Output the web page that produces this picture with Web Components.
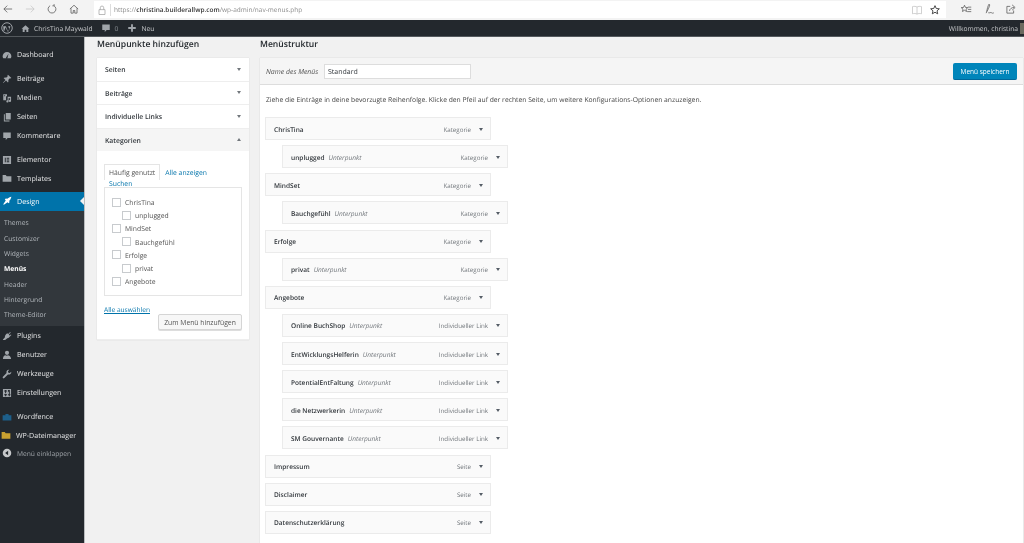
<!DOCTYPE html>
<html lang="de">
<head>
<meta charset="utf-8">
<title>Menüs</title>
<style>
html, body { margin: 0; height: 100%; overflow: hidden; background: #f1f1f1; }
body { font: 7px "Open Sans", "Liberation Sans", sans-serif; color: #444; display: flex; flex-direction: column; text-rendering: geometricPrecision; filter: blur(.3px); }
</style>
</head>
<body>
<browser-bar url="christina.builderallwp.com"></browser-bar>
<admin-bar></admin-bar>
<div style="display:flex;flex:1;min-height:0">
	<side-menu></side-menu>
	<menu-screen style="flex:1;min-width:0"></menu-screen>
</div>

<script>
const ICONS = {
	back: '<path d="M13.500 8H2.500M7 3.500 2.500 8 7 12.500" fill="none" stroke="currentColor" stroke-width="1"/>',
	forward: '<path d="M2.500 8h11M9 3.500 13.500 8 9 12.500" fill="none" stroke="currentColor" stroke-width="1"/>',
	reload: '<path d="M5.500 3.600A5.200 5.200 0 1 0 10.500 3.600M10.800 1.500v2.300h-2.300" fill="none" stroke="currentColor" stroke-width="1"/>',
	home: '<path d="M2.500 8 8 3l5.500 5M4 7v6.500h3V10h2v3.500h3V7" fill="none" stroke="currentColor" stroke-width="1"/>',
	lock: '<path d="M4 7.500h8v6.500H4zM5.700 7.500V5a2.300 2.300 0 0 1 4.600 0v2.500" fill="none" stroke="currentColor" stroke-width=".9"/>',
	book: '<path d="M8 4C6.500 3 4 3 2 3.500v9.500c2-.5 4.500-.5 6 .5 1.500-1 4-1 6-.5V3.500C12 3 9.500 3 8 4zM8 4v9.500" fill="none" stroke="currentColor" stroke-width=".9"/>',
	star: '<path d="m8 2.200 1.700 3.800 4.100.4-3.100 2.700.9 4-3.600-2.100-3.600 2.100.9-4-3.100-2.700 4.100-.4z" fill="none" stroke="currentColor" stroke-width="1.300"/>',
	favlist: '<path d="m6 3 1.300 2.900 3.100.3-2.400 2 .7 3.100L6 9.700l-2.700 1.600.7-3.100-2.400-2 3.100-.3zM10.500 5.500H15M10.500 8.500H15M9.500 11.500H15" fill="none" stroke="currentColor" stroke-width="1"/>',
	pen: '<path d="M8 1.500C6.500 4 5.500 8 5 11.500c1.500-2.500 3.500-6 4-9zM5 11.500l-.8 2M7 13c1.500.8 3-1 4.500 0s2 .5 3 0" fill="none" stroke="currentColor" stroke-width="1"/>',
	share: '<path d="M7 4.500H2.500v9h9V10M6 10.500c.5-3 3-4.500 6-4.500M9.500 2.500 13.500 6l-4 3.500" fill="none" stroke="currentColor" stroke-width="1"/>',
	wp: '<circle cx="8" cy="8" r="7" fill="none" stroke="currentColor" stroke-width="1.300"/><path d="M3 5.500h3.500L9.500 13 11 9l-1.500-3.500h3L10 13H9L6 7l-2 6h-.5z" fill="currentColor"/>',
	house: '<path d="M8 2 1 8.500h2V14h3.500v-4h3v4H13V8.500h2z" fill="currentColor"/>',
	comment: '<path d="M2 2.500h12v8.500H9l-3 3.500V11H2z" fill="currentColor"/>',
	plus: '<path d="M6.500 2h3v4.500H14v3H9.500V14h-3V9.500H2v-3h4.500z" fill="currentColor"/>',
	gauge: '<path d="M8 3a7 7 0 0 0-7 7c0 1.300.3 2.400 1 3h12c.7-.6 1-1.700 1-3a7 7 0 0 0-7-7zm-1 8 3.500-5-1.500 5.700a1.300 1.300 0 1 1-2-.7z" fill="currentColor"/>',
	pin: '<path d="m9.500 1 5.500 5.500-1.500.8-1-.6L10 9.500c.6 1.500.3 3-.5 4L6.500 10.500 2 14.500l-.5-.5L5.500 9.500 2.500 6.500c1-.8 2.500-1.100 4-.5L9.200 3.500 8.700 2.500z" fill="currentColor"/>',
	media: '<path d="M2 2h6v3H6.500v6.500H2zM3.500 3.500v1.500H5V3.500zM9 6h5.500v6.500a1.800 1.800 0 1 1-1.500-1.700V8.500h-2.500v5a1.800 1.800 0 1 1-1.500-1.800z" fill="currentColor"/>',
	pages: '<path d="M6 1.500h8v10.500H6zM4.500 3.500V13.500H12V15H3V3.500z" fill="currentColor"/>',
	elementor: '<path d="M1.500 1.500h13v13h-13zM4.500 4.500v7H6v-7zM7.500 4.500V6h4V4.500zM7.500 7.300v1.400h4V7.300zM7.500 10v1.500h4V10z" fill="currentColor" fill-rule="evenodd"/>',
	folder: '<path d="M1 3h5l1.500 2H15v9H1z" fill="currentColor"/>',
	brush: '<path d="M15 1c-3 .6-5.500 2-6.500 3.500L6 4 4.500 5.500 6 7 2 13l1 1 6-4 1.500 1.500L12 10l-.5-2.500C13 6.500 14.400 4 15 1z" fill="currentColor"/>',
	plug: '<path d="M14 2.500 10.500 6l-1-1L13 1.500zM15 6.500l-3.500 3.500-1-1L14 5.500zM8.500 3.500l4.500 4.500c-.8 2-2.300 3.300-4.500 3.500L5 14.500 1.500 14.500 1.500 13.500 4.500 10.500C4.700 7 6 4.700 8.500 3.500z" fill="currentColor"/>',
	user: '<circle cx="8" cy="4.500" r="3.300" fill="currentColor"/><path d="M1.500 14.500c0-4 2-5.800 4-6 .8.800 3.200.8 4 0 2 .2 5 2 5 6z" fill="currentColor"/>',
	wrench: '<path d="M14.800 4.200a4 4 0 0 1-5.300 4.500L3.700 14.500a1.500 1.500 0 0 1-2.200-2.200l5.800-5.800A4 4 0 0 1 11.800 1.200L9.500 3.500l.7 2.300 2.300.7z" fill="currentColor"/>',
	settings: '<path d="M1.500 1.500h13v13h-13zM3.500 4v1.500H5V8h1.500V5.500H8V4H6.500V3H5v1zM9.500 3v3H11v4H9.500v1.500H11V13h1.500v-1.500h1V10h-1V3zM3.500 10v1.500H5V13h1.500v-1.500H8V10H6.500V9H5v1z" fill="currentColor" fill-rule="evenodd"/>',
	wordfence: '<path d="M1 5h4.500V3h5v2H15v8.500H1z" fill="currentColor"/>',
	collapse: '<circle cx="8" cy="8" r="6.800" fill="currentColor"/><path d="M9.800 4.500v7L5 8z" fill="#23282d"/>'
};

// small icon element, name picks the drawing from ICONS
class AppIcon extends HTMLElement {
	constructor() {
		super();
		this.attachShadow({mode: "open"});
	}
	connectedCallback() {
		const size = this.getAttribute("size") || 12;
		this.shadowRoot.innerHTML = `
			<style>
				:host { display: inline-flex; flex: none; width: ${size}px; height: ${size}px; }
				svg { width: 100%; height: 100%; display: block; }
			</style>
			<svg viewBox="0 0 16 16">${ICONS[this.getAttribute("name")] || ""}</svg>`;
	}
}
customElements.define("app-icon", AppIcon);

class BrowserBar extends HTMLElement {
	constructor() {
		super();
		this.attachShadow({mode: "open"});
		this.shadowRoot.innerHTML = `
			<style>
				:host { display: flex; align-items: center; height: 20px; background: #f3f3f3; color: #555; box-sizing: border-box; padding: 0 4px 2px 0; }
				.nav { display: flex; width: 94px; box-sizing: border-box; padding-left: 2px; gap: 10px; }
				.nav app-icon:nth-child(2) { color: #c4c4c4; }
				.url { flex: none; width: 852px; height: 17px; margin-top: 1px; box-sizing: border-box; background: #fff; display: flex; align-items: center; padding: 0 5px 0 2px; font-size: 6.500px; color: #8a8a8a; }
				.url b { font-weight: 600; color: #333; }
				.url span { flex: 1; margin-left: 2px; padding-left: 3px; border-left: 1px solid #ddd; line-height: 12px; }
				.url app-icon + app-icon { margin-left: 6px; }
				.url app-icon:last-child { color: #444; }
				.tools { flex: 1; display: flex; justify-content: space-between; padding: 0 3px 0 14px; }
			</style>
			<div class="nav">
				<app-icon name="back"></app-icon>
				<app-icon name="forward"></app-icon>
				<app-icon name="reload"></app-icon>
				<app-icon name="home"></app-icon>
			</div>
			<div class="url">
				<app-icon name="lock" style="color:#999"></app-icon>
				<span>https://<b>christina.builderallwp.com</b>/wp-admin/nav-menus.php</span>
				<app-icon name="book" style="color:#bbb"></app-icon>
				<app-icon name="star"></app-icon>
			</div>
			<div class="tools">
				<app-icon name="favlist"></app-icon>
				<app-icon name="pen"></app-icon>
				<app-icon name="share"></app-icon>
			</div>`;
	}
}
customElements.define("browser-bar", BrowserBar);

class AdminBar extends HTMLElement {
	constructor() {
		super();
		this.attachShadow({mode: "open"});
		this.shadowRoot.innerHTML = `
			<style>
				:host { display: flex; align-items: center; height: 17px; background: #23282d; color: #c8cacc; font-size: 6.700px; padding-left: 1px; box-sizing: border-box; border-bottom: 1px solid #54595d; }
				app-icon { color: #a0a5aa; }
				.site { margin-left: 8px; display: flex; align-items: center; gap: 4px; }
				.count { margin-left: 8px; display: flex; align-items: center; gap: 4px; }
				.count span { color: #8a8f94; }
				.new { margin-left: 9px; display: flex; align-items: center; gap: 4px; }
				.howdy { margin-left: auto; white-space: nowrap; display: flex; align-items: center; gap: 2px; }
				.avatar { width: 4px; height: 11px; background: #6b6b60; }
			</style>
			<app-icon name="wp" size="12"></app-icon>
			<div class="site"><app-icon name="house" size="9"></app-icon>ChrisTina Maywald</div>
			<div class="count"><app-icon name="comment" size="10"></app-icon><span>0</span></div>
			<div class="new"><app-icon name="plus" size="10"></app-icon>Neu</div>
			<div class="howdy">Willkommen, christina <div class="avatar"></div></div>`;
	}
}
customElements.define("admin-bar", AdminBar);

const SIDE_ITEMS = [
	["gauge", "Dashboard", 0],
	["pin", "Beiträge", 1], ["media", "Medien", 0], ["pages", "Seiten", 0], ["comment", "Kommentare", 0],
	["elementor", "Elementor", 1], ["folder", "Templates", 0],
	["brush", "Design", 1, "current"],
	["plug", "Plugins", 0], ["user", "Benutzer", 0], ["wrench", "Werkzeuge", 0], ["settings", "Einstellungen", 0],
	["wordfence", "Wordfence", 1, "wf"], ["folder", "WP-Dateimanager", 0, "fm"],
	["collapse", "Menü einklappen", 0, "fold"]
];
const SUB_ITEMS = ["Themes", "Customizer", "Widgets", "Menüs", "Header", "Hintergrund", "Theme-Editor"];

class SideMenu extends HTMLElement {
	constructor() {
		super();
		this.attachShadow({mode: "open"});
		let rows = "";
		for (const [icon, label, gap, kind] of SIDE_ITEMS) {
			rows += `<div class="item ${kind || ""} ${gap ? "gap" : ""}"><app-icon name="${icon}" size="${kind == "fm" ? 12 : 10}"></app-icon><span>${label}</span></div>`;
			if (kind == "current") {
				rows += `<div class="sub">${SUB_ITEMS.map(s => `<div class="${s == "Menüs" ? "on" : ""}">${s}</div>`).join("")}</div>`;
			}
		}
		this.shadowRoot.innerHTML = `
			<style>
				:host { display: block; flex: none; width: 85px; box-sizing: border-box; background: #23282d; border-right: 1px solid #b9bcbe; padding-top: 8.500px; color: #e4e5e6; font-size: 7.100px; }
				.item { height: 18.900px; display: flex; align-items: center; padding-left: 2px; position: relative; }
				.item span { padding-top: 1px; }
				.item app-icon { width: 10px; color: #a0a5aa; margin-right: 5px; }
				.gap { margin-top: 5.100px; }
				.item.current { background: #0073aa; color: #fff; margin-top: 4.100px; }
				.current app-icon { color: #fff; }
				.current::after { content: ""; position: absolute; right: 0; top: 5px; border: 4.500px solid transparent; border-right-color: #f1f1f1; border-left-width: 0; }
				.wf app-icon { color: #1d5f8a; }
				.fm { padding-left: 1px; }
				.fm app-icon { color: #c8a030; margin-right: 5px; }
				.fold { color: #a0a5aa; margin-top: -1px; font-size: 6.700px; }
				.fold app-icon { color: #c6c8ca; }
				.sub { background: #32373c; color: #b4b9be; padding: 4.500px 0 4px 4px; font-size: 6.700px; }
				.sub div { height: 15.300px; line-height: 16.300px; }
				.sub .on { color: #fff; font-weight: 700; }
			</style>
			${rows}`;
	}
}
customElements.define("side-menu", SideMenu);

// one row of the accordion in the left column
class AccordionRow extends HTMLElement {
	constructor() {
		super();
		this.attachShadow({mode: "open"});
		this.shadowRoot.innerHTML = `
			<style>
				:host { display: block; border-bottom: 1px solid #eee; }
				.head { display: flex; justify-content: space-between; align-items: center; height: 22.500px; padding: 0 8px 0 8px; font-weight: 600; color: #32373c; font-size: 6.800px; }
				.head span { padding-top: 1px; }
				:host([open]) .head { background: #f5f5f5; }
				i { width: 0; height: 0; border: 2px solid transparent; border-top: 3px solid #72777c; border-bottom: 0; }
				:host([open]) i { border-top: 0; border-bottom: 3px solid #72777c; }
			</style>
			<div class="head"><span><slot name="title"></slot></span><i></i></div>
			<slot></slot>`;
	}
}
customElements.define("accordion-row", AccordionRow);

class CheckRow extends HTMLElement {
	constructor() {
		super();
		this.attachShadow({mode: "open"});
		this.shadowRoot.innerHTML = `
			<style>
				:host { display: flex; align-items: center; height: 13.200px; gap: 4px; color: #555; font-size: 6.800px; }
				:host([child]) { padding-left: 10px; }
				b { width: 7px; height: 7px; border: 1px solid #c8cbce; background: #fff; flex: none; }
				span { padding-top: 1px; }
			</style>
			<b></b><span><slot></slot></span>`;
	}
}
customElements.define("check-row", CheckRow);

class MenuItem extends HTMLElement {
	constructor() {
		super();
		this.attachShadow({mode: "open"});
		this.shadowRoot.innerHTML = `
			<style>
				:host { display: flex; align-items: center; box-sizing: border-box; width: 226px; height: 23px; background: #fafafa; border: 1px solid #ebebeb; padding: 1px 7px 0 8px; color: #32373c; font-size: 6.550px; font-weight: 600; }
				:host([child]) { margin-left: 17px; }
				em { color: #72777c; font-weight: 400; margin-left: 4px; }
				.type { margin-left: auto; color: #72777c; font-weight: 400; font-size: 6.200px; }
				i { margin-left: 8px; width: 0; height: 0; border: 2px solid transparent; border-top: 3px solid #555d66; border-bottom: 0; }
			</style>
			<slot></slot><em></em>
			<span class="type"></span><i></i>`;
	}
	connectedCallback() {
		this.shadowRoot.querySelector("em").textContent = this.hasAttribute("child") ? "Unterpunkt" : "";
		this.shadowRoot.querySelector(".type").textContent = this.getAttribute("type");
	}
}
customElements.define("menu-item", MenuItem);

const MENU = [
	["ChrisTina", "Kategorie"], ["unplugged", "Kategorie", 1],
	["MindSet", "Kategorie"], ["Bauchgefühl", "Kategorie", 1],
	["Erfolge", "Kategorie"], ["privat", "Kategorie", 1],
	["Angebote", "Kategorie"],
	["Online BuchShop", "Individueller Link", 1], ["EntWicklungsHelferin", "Individueller Link", 1],
	["PotentialEntFaltung", "Individueller Link", 1], ["die Netzwerkerin", "Individueller Link", 1],
	["SM Gouvernante", "Individueller Link", 1],
	["Impressum", "Seite"], ["Disclaimer", "Seite"], ["Datenschutzerklärung", "Seite"]
];

class MenuScreen extends HTMLElement {
	constructor() {
		super();
		this.attachShadow({mode: "open"});
		const items = MENU.map(([n, t, c]) => `<menu-item type="${t}" ${c ? "child" : ""}>${n}</menu-item>`).join("");
		this.shadowRoot.innerHTML = `
			<style>
				:host { display: flex; gap: 11px; padding-left: 12px; box-sizing: border-box; overflow: hidden; }
				h2 { margin: 0; height: 21px; line-height: 15px; font-size: 8.600px; font-weight: 600; color: #23282d; }
				.left { width: 152px; flex: none; }
				.right { flex: 1; min-width: 0; padding-right: 1px; display: flex; flex-direction: column; }
				.panel { background: #fff; box-shadow: 0 0 1px rgba(0,0,0,.18); }
				.inner { padding: 12.500px 7px 9px 7px; }
				.tabs { display: flex; align-items: center; height: 16px; font-size: 6.800px; }
				.tabs span { border: 1px solid #e5e5e5; border-bottom: 0; height: 15px; line-height: 16px; padding: 0 4px; color: #555; }
				a { color: #0073aa; }
				.tabs a { margin-left: 5px; padding-top: 1px; }
				.search { font-size: 6.800px; padding-left: 5px; height: 8px; line-height: 8px; }
				.list { border: 1px solid #e5e5e5; padding: 8px 7px 6px 7px; height: 93px; margin-top: -1px; }
				.all { display: block; margin-top: 9.500px; text-decoration: underline; font-size: 6.600px; height: 9px; line-height: 10px; }
				.add { display: flex; justify-content: flex-end; margin-top: 0; }
				button, .save { font: inherit; }
				.add button { height: 16px; width: 84px; padding: 1px 0 0; background: #f7f7f7; border: 1px solid #d5d5d5; border-radius: 2px; color: #555; font-size: 6.800px; box-shadow: 0 1px 0 #ddd; }
				.box { flex: 1; background: #fff; box-shadow: 0 0 1px rgba(0,0,0,.2); }
				.top { display: flex; align-items: center; height: 27px; background: #f5f5f5; border-bottom: 1px solid #ddd; box-sizing: border-box; padding: 1px 6px 0 6px; }
				.top em { font-size: 6.900px; color: #555; width: 58px; padding-top: 1px; }
				.top input { width: 147px; height: 15px; box-sizing: border-box; border: 1px solid #ddd; padding: 2px 3px 0; font: 7px "Open Sans", sans-serif; color: #32373c; background: #fff; text-rendering: geometricPrecision; }
				.save { margin-left: auto; width: 64px; height: 17px; padding: 1px 0 0; background: #0085ba; color: #fff; border: 0; border-bottom: 1px solid #006799; border-radius: 2px; font-size: 6.500px; }
				p { margin: 0; height: 32px; line-height: 30px; padding-left: 6px; font-size: 6.750px; color: #444; }
				.items { display: flex; flex-direction: column; gap: 5.140px; padding-left: 5px; }
			</style>
			<div class="left">
				<h2>Menüpunkte hinzufügen</h2>
				<div class="panel">
					<accordion-row><span slot="title">Seiten</span></accordion-row>
					<accordion-row><span slot="title">Beiträge</span></accordion-row>
					<accordion-row><span slot="title">Individuelle Links</span></accordion-row>
					<accordion-row open>
						<span slot="title">Kategorien</span>
						<div class="inner">
							<div class="tabs"><span>Häufig genutzt</span><a>Alle anzeigen</a></div>
							<div class="search"><a>Suchen</a></div>
							<div class="list">
								<check-row>ChrisTina</check-row>
								<check-row child>unplugged</check-row>
								<check-row>MindSet</check-row>
								<check-row child>Bauchgefühl</check-row>
								<check-row>Erfolge</check-row>
								<check-row child>privat</check-row>
								<check-row>Angebote</check-row>
							</div>
							<a class="all">Alle auswählen</a>
							<div class="add"><button>Zum Menü hinzufügen</button></div>
						</div>
					</accordion-row>
				</div>
			</div>
			<div class="right">
				<h2>Menüstruktur</h2>
				<div class="box">
					<div class="top">
						<em>Name des Menüs</em>
						<input value="Standard">
						<button class="save">Menü speichern</button>
					</div>
					<p>Ziehe die Einträge in deine bevorzugte Reihenfolge. Klicke den Pfeil auf der rechten Seite, um weitere Konfigurations-Optionen anzuzeigen.</p>
					<div class="items">${items}</div>
				</div>
			</div>`;
	}
}
customElements.define("menu-screen", MenuScreen);
</script>
</body>
</html>
